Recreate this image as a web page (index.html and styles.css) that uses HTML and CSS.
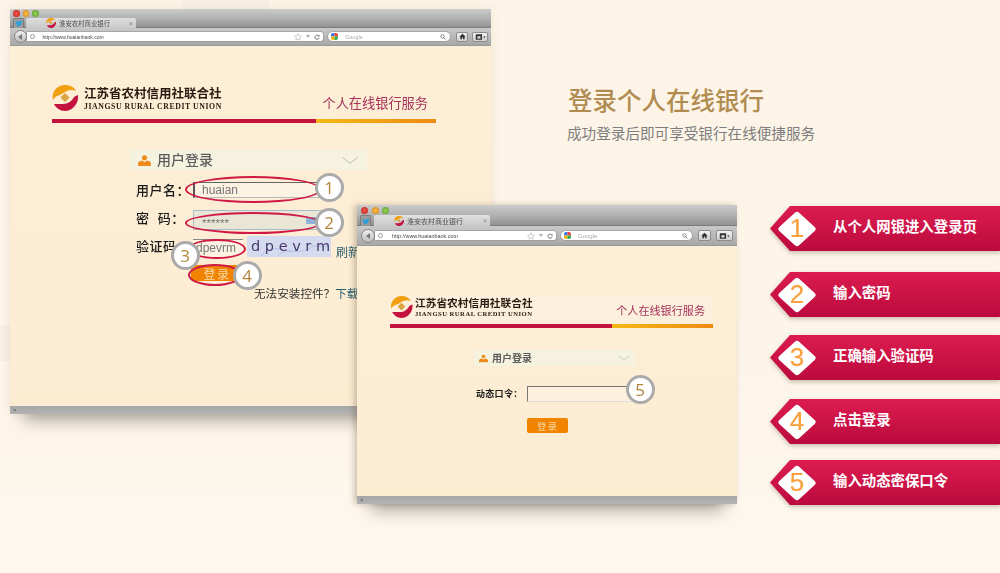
FILE: index.html
```html
<!DOCTYPE html>
<html lang="zh-CN">
<head>
<meta charset="utf-8">
<title>登录个人在线银行</title>
<link rel="stylesheet" href="styles.css">
</head>
<body>
<svg class="defs" width="0" height="0" aria-hidden="true">
  <symbol id="logo" viewBox="0 0 26 26">
    <path d="M1 15C-1 7 5 0 13 0c5 0 9 2 11 6-4-2-8-1-11 1-3 2-5 3-8 4-2 1-3 2-4 4z" fill="#f0a010"/>
    <path d="M2 19c3 0 6 0 9 0 5 0 9-3 11-7 2-1 3-2 4-2 1 8-5 16-13 16-5 0-9-3-11-7z" fill="#c4123f"/>
    <path d="M13 8l4.500 4.500L13 17l-4.500-4.500z" fill="#d9a441"/>
  </symbol>
  <symbol id="star" viewBox="0 0 12 12">
    <path d="M6 1l1.500 3.400 3.700.4-2.800 2.400.8 3.600L6 9 2.800 10.800l.8-3.600L.8 4.800l3.700-.4z" fill="none" stroke="#a8a8a8" stroke-width=".8"/>
  </symbol>
  <symbol id="reload" viewBox="0 0 10 10">
    <path d="M8 3.500A3.500 3.500 0 1 0 8.500 6" fill="none" stroke="#555" stroke-width="1.300"/>
    <path d="M6.500 3.800L9.200 4V1.300z" fill="#555"/>
  </symbol>
  <symbol id="lens" viewBox="0 0 10 10">
    <circle cx="4" cy="4" r="2.800" fill="none" stroke="#666" stroke-width="1.200"/>
    <path d="M6 6l3 3" stroke="#666" stroke-width="1.500"/>
  </symbol>
  <symbol id="home" viewBox="0 0 10 10">
    <path d="M5 1L.5 5.200H2V9h2.300V6.500h1.400V9H8V5.200h1.500z" fill="#333"/>
  </symbol>
  <symbol id="winbtn" viewBox="0 0 14 10">
    <path d="M1 1.500h8v7H1z" fill="#333"/>
    <path d="M3 4h4v3H3z" fill="#ddd"/>
    <path d="M10.500 4.500h3L12 6.500z" fill="#333"/>
  </symbol>
  <symbol id="bird" viewBox="0 0 10 9">
    <path d="M9.500 1.500l-1 .3.800-1-1.100.5C7 0 5 .6 4.900 2.500 3.300 2.400 1.900 1.700.9.600.4 1.800.8 2.900 1.500 3.500l-.8-.2c0 1 .7 1.800 1.600 2h-.8c.3.800 1 1.200 1.800 1.300C2.500 7.300 1.500 7.600.4 7.500 4 9.500 8.800 7.800 8.700 2.500z" fill="#2f9fd8"/>
  </symbol>
  <symbol id="user" viewBox="0 0 14 12">
    <circle cx="7" cy="3" r="2.800" fill="#ee8a1a"/>
    <path d="M0 12V9c0-1.500 2-2.500 4.500-3L7 8l2.500-2C12 6.500 14 7.500 14 9v3z" fill="#ee8a1a"/>
  </symbol>
  <symbol id="chev" viewBox="0 0 16 7">
    <path d="M.5.500L8 6.300 15.500.500" fill="none" stroke="#b9bcae" stroke-width="1"/>
  </symbol>
  <symbol id="gmark" viewBox="0 0 10 10">
    <path d="M0 0h5v5H0z" fill="#3b78e7"/><path d="M5 0h5v5H5z" fill="#e8453c"/>
    <path d="M0 5h5v5H0z" fill="#f5b400"/><path d="M5 5h5v5H5z" fill="#34a853"/>
  </symbol>
</svg>

<main class="page">
  <div class="patch patch-top"></div>
  <div class="patch patch-left"></div>

  <section class="win win-a">
    <div class="bar-dots"><i class="dot red"></i><i class="dot amber"></i><i class="dot green"></i></div>
    <div class="bar-tabs">
      <span class="pin"><svg><use href="#bird"/></svg></span>
      <span class="tab"><svg class="fav"><use href="#logo"/></svg><span class="tab-title">淮安农村商业银行</span><span class="tab-x">×</span></span>
    </div>
    <div class="bar-nav">
      <span class="back"><span class="back-arrow"></span></span>
      <span class="url"><span class="globe"></span><span class="url-text">http://www.huaianbank.com</span><svg class="ic-star"><use href="#star"/></svg><span class="drop"></span><svg class="ic-reload"><use href="#reload"/></svg></span>
      <span class="search"><svg class="ic-g"><use href="#gmark"/></svg><span class="search-text">Google</span><svg class="ic-lens"><use href="#lens"/></svg></span>
      <span class="tool tool-home"><svg><use href="#home"/></svg></span>
      <span class="tool tool-win"><svg><use href="#winbtn"/></svg></span>
    </div>
    <div class="content">
      <header class="brand">
        <div class="brand-row">
          <svg class="brand-logo"><use href="#logo"/></svg>
          <div class="brand-names"><div class="brand-cn">江苏省农村信用社联合社</div><div class="brand-en">JIANGSU RURAL CREDIT UNION</div></div>
          <div class="brand-service">个人在线银行服务</div>
        </div>
        <div class="brand-rule"><span class="rule-red"></span><span class="rule-gold"></span></div>
      </header>
      <form class="login">
        <div class="login-head"><svg class="ic-user"><use href="#user"/></svg><span>用户登录</span><svg class="ic-chev"><use href="#chev"/></svg></div>
        <div class="row row-user"><label class="lab">用户名：</label><span class="field field-user">huaian</span></div>
        <div class="row row-pass"><label class="lab">密&nbsp;&nbsp;码：</label><span class="field field-pass">******<i class="kbd"></i></span></div>
        <div class="row row-code"><label class="lab">验证码</label><span class="field field-code">dpevrm</span><span class="captcha"><svg class="noise" viewBox="0 0 84 21"><path d="M14 20c6-7 14-9 24-6s20 1 28-3M30 21c4-4 8-8 16-5M60 6c4 4 10 6 22 4" fill="none" stroke="#aab4dc" stroke-width=".7"/></svg><span class="captcha-text">d p e v r m</span></span><a class="refresh">刷新</a></div>
        <div class="row row-btn"><span class="btn btn-a">登录</span></div>
        <div class="help">无法安装控件？<a class="dl">下载</a></div>
      </form>
    </div>
    <div class="status"><span>×</span></div>
    <span class="oval oval-1"></span><span class="oval oval-2"></span><span class="oval oval-3"></span><span class="oval oval-4"></span>
    <span class="mark mark-1">1</span><span class="mark mark-2">2</span><span class="mark mark-3">3</span><span class="mark mark-4">4</span>
  </section>

  <section class="win win-b">
    <div class="bar-dots"><i class="dot red"></i><i class="dot amber"></i><i class="dot green"></i></div>
    <div class="bar-tabs">
      <span class="pin"><svg><use href="#bird"/></svg></span>
      <span class="tab"><svg class="fav"><use href="#logo"/></svg><span class="tab-title">淮安农村商业银行</span><span class="tab-x">×</span></span>
    </div>
    <div class="bar-nav">
      <span class="back"><span class="back-arrow"></span></span>
      <span class="url"><span class="globe"></span><span class="url-text">http://www.huaianbank.com</span><svg class="ic-star"><use href="#star"/></svg><span class="drop"></span><svg class="ic-reload"><use href="#reload"/></svg></span>
      <span class="search"><svg class="ic-g"><use href="#gmark"/></svg><span class="search-text">Google</span><svg class="ic-lens"><use href="#lens"/></svg></span>
      <span class="tool tool-home"><svg><use href="#home"/></svg></span>
      <span class="tool tool-win"><svg><use href="#winbtn"/></svg></span>
    </div>
    <div class="content">
      <header class="brand">
        <div class="brand-row">
          <svg class="brand-logo"><use href="#logo"/></svg>
          <div class="brand-names"><div class="brand-cn">江苏省农村信用社联合社</div><div class="brand-en">JIANGSU RURAL CREDIT UNION</div></div>
          <div class="brand-service">个人在线银行服务</div>
        </div>
        <div class="brand-rule"><span class="rule-red"></span><span class="rule-gold"></span></div>
      </header>
      <form class="login">
        <div class="login-head"><svg class="ic-user"><use href="#user"/></svg><span>用户登录</span><svg class="ic-chev"><use href="#chev"/></svg></div>
        <div class="row row-token"><label class="lab">动态口令：</label><span class="field field-token"></span></div>
        <div class="row row-btn"><span class="btn btn-b">登录</span></div>
      </form>
    </div>
    <div class="status"><span>×</span></div>
    <span class="mark mark-5">5</span>
  </section>

  <div class="intro">
    <h1 class="intro-title">登录个人在线银行</h1>
    <p class="intro-sub">成功登录后即可享受银行在线便捷服务</p>
  </div>

  <ol class="steps">
    <li class="step"><span class="badge"><i class="diamond"></i><b class="num">1</b></span><span class="step-text">从个人网银进入登录页</span></li>
    <li class="step"><span class="badge"><i class="diamond"></i><b class="num">2</b></span><span class="step-text">输入密码</span></li>
    <li class="step"><span class="badge"><i class="diamond"></i><b class="num">3</b></span><span class="step-text">正确输入验证码</span></li>
    <li class="step"><span class="badge"><i class="diamond"></i><b class="num">4</b></span><span class="step-text">点击登录</span></li>
    <li class="step"><span class="badge"><i class="diamond"></i><b class="num">5</b></span><span class="step-text">输入动态密保口令</span></li>
  </ol>
</main>
</body>
</html>
```
FILE: styles.css
```css
* { box-sizing: border-box; }
html, body { margin: 0; padding: 0; }
body {
  width: 1000px;
  height: 573px;
  overflow: hidden;
  background: #fdf5e9;
  font-family: "Liberation Sans", "Noto Sans CJK SC", sans-serif;
}
.defs { position: absolute; }
svg { display: block; }

.page {
  position: relative;
  height: 573px;
  padding: 87px 0 0 567px;
  background: linear-gradient(#fdf4e7 0, #fdf5e9 70%, #fff8ef 100%);
}

.patch { position: absolute; background: #f7efe3; }
.patch-top { left: 183px; top: 0; width: 86px; height: 9px; }
.patch-left { left: 0; top: 325px; width: 10px; height: 36px; background: #f7efe3; }

/* windows on the desktop */
.win {
  position: absolute;
  display: flex;
  flex-direction: column;
  background: #fcecd2;
  filter: blur(.3px);
}
.win-a {
  left: 10px; top: 9px; width: 481px; height: 405px;
  box-shadow: 0 20px 16px -14px rgba(0,0,0,.34), 0 0 9px rgba(120,100,70,.1);
}
.win-b {
  left: 357px; top: 205px; width: 380px; height: 299px;
  box-shadow: 0 20px 16px -14px rgba(0,0,0,.34), -3px 0 6px rgba(90,70,40,.28);
}

/* browser chrome */
.bar-dots {
  display: flex;
  align-items: center;
  background: linear-gradient(#cbcbcb, #b2b2b2);
}
.win-a .bar-dots { height: 9px; padding-left: 3px; gap: 3px; }
.win-b .bar-dots { height: 10px; padding-left: 4px; gap: 3.500px; }
.dot { display: block; border-radius: 50%; width: 6.500px; height: 6.500px; }
.win-b .dot { width: 7px; height: 7px; }
.red { background: radial-gradient(#f25a50, #b8201a); }
.amber { background: radial-gradient(#f7c24a, #d67d12); }
.green { background: radial-gradient(#9ed65a, #4f962a); }

.bar-tabs {
  display: flex;
  align-items: flex-end;
  background: linear-gradient(#b2b2b2, #8f8f8f);
  box-shadow: inset 0 -1px 0 #7c7c7c;
}
.win-a .bar-tabs { height: 10px; padding-left: 3px; gap: 2px; }
.win-b .bar-tabs { height: 11px; padding-left: 3px; gap: 3px; }
.pin {
  display: flex; align-items: center; justify-content: center;
  height: 100%;
  background: #9c9c9c;
  border: 1px solid #7c7c7c; border-bottom: 0;
  border-radius: 2px 2px 0 0;
}
.win-a .pin { width: 11px; }
.win-b .pin { width: 11px; }
.pin svg { width: 8px; height: 7px; }
.tab {
  display: flex; align-items: center;
  height: 100%;
  background: linear-gradient(#dfdfdf, #c9c9c9);
  border-radius: 2px 2px 0 0;
  color: #4d4d4d;
}
.win-a .tab { width: 110px; padding-left: 20px; font-size: 6.400px; }
.win-b .tab { width: 116px; padding-left: 20px; font-size: 7px; }
.fav { width: 10px; height: 10px; flex: none; }
.tab-title { margin-left: 3px; white-space: nowrap; }
.tab-x { margin-left: auto; margin-right: 3px; color: #888; font-size: 7px; }

.bar-nav {
  display: flex;
  align-items: center;
  background: linear-gradient(#c9c9c9, #a7a7a7);
  border-bottom: 1px solid #9a9a9a;
}
.win-a .bar-nav { height: 18px; padding: 0 3px 0 3.500px; }
.win-b .bar-nav { height: 20px; padding: 0 4px 0 4px; }
.back {
  position: relative; z-index: 1;
  display: flex; align-items: center; justify-content: center;
  width: 13px; height: 13px; flex: none;
  border-radius: 50%;
  background: linear-gradient(#f0f0f0, #bdbdbd);
  border: 1px solid #858585;
}
.win-b .back { width: 14px; height: 14px; }
.back-arrow {
  width: 0; height: 0; margin-right: 1px;
  border: 3px solid transparent; border-left: 0;
  border-right: 4px solid #777;
}
.url, .search {
  display: flex; align-items: center;
  height: 9px;
  background: #fff;
  box-shadow: 0 0 0 .5px #8d8d8d;
}
.url { flex: 1; margin-right: 5px; border-radius: 0 2px 2px 0; }
.win-a .url { font-size: 5px; }
.win-b .url { font-size: 5.400px; }
.globe {
  width: 5px; height: 5px; margin-left: 3px; flex: none;
  border-radius: 50%; border: 1px solid #9a9a9a;
}
.url-text { margin-left: 8px; color: #444; white-space: nowrap; }
.win-b .url-text { margin-left: 9px; }
.ic-star { width: 8px; height: 8px; margin-left: auto; }
.drop {
  width: 0; height: 0; margin: 0 4px;
  border: 2px solid transparent; border-top: 3px solid #aaa; border-bottom: 0;
}
.ic-reload { width: 6px; height: 6px; margin-right: 3px; }
.search { border-radius: 5px; margin-right: 6px; }
.win-a .search { width: 122px; font-size: 5.500px; }
.win-b .search { width: 131px; font-size: 6px; }
.ic-g { width: 7px; height: 7px; margin-left: 3px; border-radius: 2px; }
.search-text { margin-left: 7px; color: #aaa; }
.ic-lens { width: 6px; height: 6px; margin-left: auto; margin-right: 4px; }
.tool {
  display: flex; align-items: center; justify-content: center;
  height: 10px;
  background: linear-gradient(#f2f2f2, #cfcfcf);
  border: 1px solid #8c8c8c;
  border-radius: 2px;
}
.tool-home { width: 12px; margin-right: 4px; }
.tool-win { width: 16px; }
.win-b .tool { height: 11px; }
.win-b .tool-home { width: 13px; margin-right: 5px; }
.win-b .tool-win { width: 17px; }
.tool-home svg { width: 7px; height: 7px; }
.tool-win svg { width: 11px; height: 8px; }

/* page inside the browser */
.content {
  flex: 1;
  min-height: 0;
  background: linear-gradient(#fdeed6, #fbecd2);
}
.win-a .content { padding: 39px 0 0 42px; }
.win-b .content { padding: 50px 0 0 33px; }
.brand { width: 384px; }
.win-b .brand { width: 323px; }
.brand-row { display: flex; align-items: flex-start; }
.win-a .brand-row { height: 34px; }
.win-b .brand-row { height: 28px; background: #fcefdc; }
.brand-logo { flex: none; }
.win-a .brand-logo { width: 26px; height: 26px; }
.win-b .brand-logo { width: 23px; height: 22px; }
.brand-names { margin-left: 6px; }
.win-b .brand-names { margin-left: 2px; }
.brand-cn {
  font-weight: 700; color: #2a1a10; white-space: nowrap;
}
.win-a .brand-cn { font-size: 12.500px; line-height: 15px; margin-top: 2px; }
.win-b .brand-cn { font-size: 10.700px; line-height: 13px; margin-top: 1px; }
.brand-en {
  font-family: "Liberation Serif", serif; font-weight: 700; color: #2a1a10; white-space: nowrap;
}
.win-a .brand-en { font-size: 7.800px; line-height: 9px; letter-spacing: .55px; }
.win-b .brand-en { font-size: 6.600px; line-height: 8px; letter-spacing: .5px; }
.brand-service { margin-left: auto; color: #a5315a; white-space: nowrap; }
.win-a .brand-service { font-size: 13.200px; line-height: 18px; margin: 10px 8px 0 auto; }
.win-b .brand-service { font-size: 11.100px; line-height: 15px; margin: 8px 8px 0 auto; }
.brand-rule { display: flex; height: 4px; }
.rule-red { background: #c4123f; }
.rule-gold { flex: 1; background: linear-gradient(90deg, #f5b814, #ee8a14); }
.win-a .rule-red { width: 264px; }
.win-b .rule-red { width: 222px; }

.login-head {
  display: flex; align-items: center;
  background: #f5f3e0;
  color: #5c5c5c; font-weight: 500;
}
.login-head span { transform: translateY(-1.500px); }
.win-a .login { margin: 27px 0 0 78px; width: 237px; }
.win-a .login-head { height: 20px; font-size: 14px; padding-left: 8px; }
.win-b .login { margin: 22px 0 0 84px; width: 161px; }
.win-b .login-head { height: 16px; font-size: 10px; padding-left: 5px; }
.win-b .login-head span { font-weight: 700; }
.ic-user { width: 13px; height: 11px; flex: none; margin-right: 6px; }
.win-b .ic-user { width: 9px; height: 9px; margin-right: 4px; }
.ic-chev { margin-left: auto; }
.win-a .ic-chev { width: 16px; height: 7px; margin-right: 9px; }
.win-b .ic-chev { width: 12px; height: 6px; margin-right: 5px; }

.row { display: flex; align-items: center; }
.lab { white-space: nowrap; color: #1a1a1a; font-weight: 500; }
.win-a .lab { width: 57px; margin-left: 6px; font-size: 13px; letter-spacing: .5px; }
.win-b .lab { width: 53px; margin-left: 2px; font-family: "Liberation Serif", "Noto Sans CJK SC", serif; font-weight: 700; font-size: 9px; letter-spacing: .3px; }
.row-user .lab { margin-bottom: 2px; }
.row-pass .lab { margin-bottom: 5px; }
.row-code .lab { margin-bottom: 2px; }
.row-token .lab { margin-bottom: 2px; }
.field {
  display: flex; align-items: center;
  white-space: nowrap;
  color: #777; font-size: 12px;
}
.row-user { margin-top: 12px; height: 16px; }
.field-user {
  width: 130px; height: 16px; padding-left: 7px;
  background: #fdf3e3;
  border-left: 2px solid #555; border-top: 1px solid #666; border-bottom: 1px solid #bbb;
}
.row-pass { margin-top: 12px; height: 20px; }
.field-pass {
  position: relative;
  width: 130px; height: 20px; padding: 5px 0 0 8px;
  background: #e9e6d5;
  border: 1px solid #a9bdc9;
  font-size: 11.500px;
}
.kbd {
  position: absolute; right: 6px; top: 6px;
  width: 10px; height: 7px;
  border-radius: 1px;
  background: #8db4d8;
}
.row-code { margin-top: 6px; height: 21px; }
.field-code {
  width: 50px; height: 18px; margin-top: 2px; padding-left: 3px;
  border-top: 1px solid #888;
  background: #fdf3e3;
}
.captcha {
  position: relative;
  width: 84px; height: 21px; margin-left: 4px;
  background: #d5dbef;
  overflow: hidden;
}
.noise { position: absolute; left: 0; top: 0; width: 84px; height: 21px; }
.captcha-text {
  position: relative;
  display: block;
  padding-left: 4px;
  color: #4a3a6e;
  font-family: "DejaVu Sans", sans-serif;
  font-size: 14.500px;
  line-height: 21px;
  white-space: nowrap;
}
.refresh { margin-left: 5px; color: #2a6070; font-size: 12px; white-space: nowrap; transform: translateY(5px); }
.win-a .row-btn { margin: 8px 0 0 61px; }
.win-b .row-btn { margin: 16px 0 0 53px; }
.btn {
  display: flex; align-items: center; justify-content: center;
  background: #f08300;
  color: #f8d9a8;
  border-radius: 2px;
}
.btn-a { width: 48px; height: 16px; padding-left: 4px; font-size: 12px; letter-spacing: 1.500px; }
.btn-b { width: 41px; height: 15px; font-size: 9.500px; letter-spacing: 1px; }
.help {
  margin: 5px 0 0 124px;
  white-space: nowrap;
  color: #333; font-size: 11.600px; line-height: 16px;
}
.dl { color: #2a6070; }
.row-token { margin-top: 20px; height: 16px; }
.field-token {
  width: 113px; height: 16px;
  border-left: 1.500px solid #777; border-top: 1.500px solid #777;
  border-bottom: 1px solid #ddd;
  background: #fdf1dd;
}

.status {
  display: flex; align-items: center;
  height: 8px;
  padding-left: 3px;
  background: linear-gradient(#a6a6a6, #b4b4b4);
  color: #555; font-size: 6px;
}

/* annotations laid over the forms */
.oval {
  position: absolute;
  border: 2px solid #d01845;
  border-radius: 50%;
}
.oval-1 { left: 175px; top: 167px; width: 136px; height: 27px; }
.oval-2 { left: 175px; top: 203px; width: 136px; height: 22px; }
.oval-3 { left: 178px; top: 230px; width: 58px; height: 20px; }
.oval-4 { left: 178px; top: 255px; width: 54px; height: 22px; }
.mark {
  position: absolute;
  display: flex; align-items: center; justify-content: center;
  width: 29px; height: 29px;
  background: #fff;
  border: 3px solid #aaa;
  border-radius: 50%;
  color: #b5853f;
  font-family: "Open Sans", "Liberation Sans", sans-serif;
  font-size: 17px;
}
.mark-1 { left: 304.500px; top: 164px; }
.mark-2 { left: 304.500px; top: 199px; }
.mark-3 { left: 160.500px; top: 231.500px; }
.mark-4 { left: 222.500px; top: 252px; }
.mark-5 { left: 268.500px; top: 170px; }

/* right column */
.intro-title {
  margin: 0 0 0 1px;
  color: #b08c50;
  font-size: 24.500px;
  line-height: 30px;
  font-weight: 500;
  white-space: nowrap;
}
.intro-sub {
  margin: 7px 0 0;
  color: #7d7d7d;
  font-size: 14.600px;
  line-height: 20px;
  white-space: nowrap;
}
.steps {
  list-style: none;
  margin: 62px 0 0 203px;
  padding: 0;
  width: 230px;
  display: grid;
  grid-template-rows: 66px 63px 64px 61px 45px;
  filter: drop-shadow(0 2px 2px rgba(90,60,30,.3));
}
.step {
  display: flex; align-items: center;
  height: 45px;
  background: linear-gradient(#dc1c50, #bb0a3e);
  clip-path: polygon(20px 0, 100% 0, 100% 100%, 20px 100%, 0 50%);
}
.badge {
  position: relative;
  display: flex; align-items: center; justify-content: center;
  width: 40px; height: 36px;
  margin-left: 7px;
}
.diamond {
  position: absolute; left: 6px; top: 4px;
  width: 28px; height: 28px;
  background: #fff;
  border-radius: 3px;
  transform: scaleY(.92) rotate(45deg);
}
.num {
  position: relative;
  top: -1px;
  color: #f9a03c;
  font-family: "Liberation Sans", sans-serif;
  font-size: 26px;
  font-weight: 400;
  line-height: 30px;
  -webkit-text-stroke: .2px #f9a03c;
}
.step-text {
  margin: 0 0 6px 16px;
  color: #fff;
  font-size: 14.400px;
  font-weight: 700;
  white-space: nowrap;
}
```
